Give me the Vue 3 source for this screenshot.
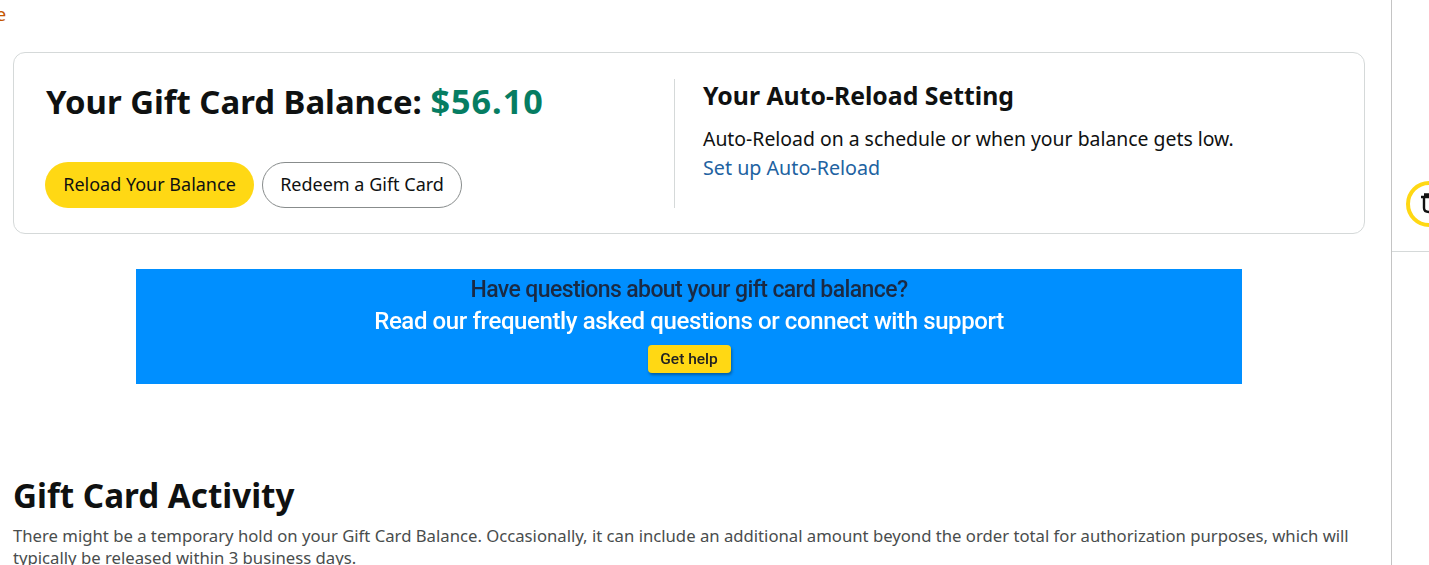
<template>
  <div class="page">
    <main class="main">
      <a class="crumb">e</a>

      <section class="balance-card">
        <div class="balance-card__left">
          <h1 class="balance-card__title">Your Gift Card Balance: <span class="balance-card__amount">$56.10</span></h1>
          <div class="balance-card__actions">
            <button class="btn btn--primary">Reload Your Balance</button>
            <button class="btn btn--outline">Redeem a Gift Card</button>
          </div>
        </div>
        <div class="balance-card__right">
          <h2 class="balance-card__subtitle">Your Auto-Reload Setting</h2>
          <p class="balance-card__text">Auto-Reload on a schedule or when your balance gets low.</p>
          <a class="balance-card__link">Set up Auto-Reload</a>
        </div>
      </section>

      <div class="banner">
        <p class="banner__question">Have questions about your gift card balance?</p>
        <p class="banner__answer">Read our frequently asked questions or connect with support</p>
        <span class="banner__btn">Get help</span>
      </div>

      <section class="activity">
        <h2 class="activity__title">Gift Card Activity</h2>
        <p class="activity__text">There might be a temporary hold on your Gift Card Balance. Occasionally, it can include an additional amount beyond the order total for authorization purposes, which will typically be released within 3 business days.</p>
      </section>
    </main>

    <aside class="side">
      <div class="side__top">
        <span class="side__badge">
          <svg viewBox="0 0 24 24" class="side__icon" aria-hidden="true">
            <path d="M5 5 H24 M8 2.5 H18 M8 5 V16 C8 19 10 20 13 20 H24" />
          </svg>
        </span>
      </div>
    </aside>
  </div>
</template>

<script setup>
</script>

<style>
html,
body {
  margin: 0;
  height: 565px;
  overflow: hidden;
  background: #ffffff;
}
</style>

<style scoped>
.page {
  display: flex;
  width: 1429px;
  height: 565px;
  overflow: hidden;
  font-family: "Noto Sans", "Open Sans", Arial, sans-serif;
  color: #0f1111;
}

.main {
  width: 1392px;
  flex: none;
  box-sizing: border-box;
  padding: 0 26px 0 13px;
  border-right: 1px solid #c4c4c4;
}

.crumb {
  display: block;
  height: 52px;
  margin-left: -13px;
  text-indent: -4px;
  padding-top: 4px;
  box-sizing: border-box;
  font-size: 18px;
  line-height: 20px;
  color: #c45500;
}

.balance-card {
  display: flex;
  height: 182px;
  box-sizing: border-box;
  border: 1px solid #d5d9d9;
  border-radius: 12px;
  padding: 25px 0 25px 31px;
}

.balance-card__left {
  width: 629px;
  flex: none;
}

.balance-card__title {
  margin: 0;
  padding-left: 1px;
  font-size: 32.9px;
  line-height: 46px;
  font-weight: 700;
  white-space: nowrap;
}

.balance-card__amount {
  color: #067d62;
  font-size: 34.2px;
  letter-spacing: 1px;
}

.balance-card__actions {
  display: flex;
  gap: 8px;
  margin-top: 37px;
}

.btn {
  height: 46px;
  box-sizing: border-box;
  border-radius: 23px;
  font: inherit;
  font-size: 18px;
  color: #0f1111;
  padding: 0 0 2px;
}

.btn--primary {
  width: 209px;
  background: #ffd814;
  border: none;
}

.btn--outline {
  width: 200px;
  background: #ffffff;
  border: 1px solid #888c8c;
}

.balance-card__right {
  flex: 1;
  margin-top: 1px;
  border-left: 1px solid #d5d9d9;
  padding-left: 28px;
}

.balance-card__subtitle {
  margin: 0;
  font-size: 24.8px;
  line-height: 33px;
  font-weight: 700;
}

.balance-card__text {
  margin: 12px 0 0;
  font-size: 19.4px;
  line-height: 29px;
}

.balance-card__link {
  font-size: 19.7px;
  line-height: 29px;
  color: #2162a1;
}

.banner {
  display: flex;
  flex-direction: column;
  align-items: center;
  width: 1106px;
  height: 115px;
  margin: 35px 0 0 123px;
  background: #008fff;
  font-family: Roboto, "Noto Sans", sans-serif;
  font-weight: 500;
  filter: blur(0.4px);
}

.banner__question {
  margin: 7px 0 0;
  font-size: 23px;
  line-height: 28px;
  letter-spacing: -0.6px;
  color: #1a2a44;
}

.banner__answer {
  margin: 2px 0 0;
  font-size: 24px;
  line-height: 30px;
  letter-spacing: -0.39px;
  color: #ffffff;
}

.banner__btn {
  width: 83px;
  height: 28px;
  margin-top: 9px;
  border-radius: 4px;
  background: #ffd814;
  box-shadow: 1px 2px 3px rgba(0, 0, 0, 0.35);
  font-size: 15.5px;
  line-height: 28px;
  text-align: center;
  color: #222222;
}

.activity {
  margin-top: 90px;
}

.activity__title {
  margin: 0;
  font-size: 33.2px;
  line-height: 44px;
  font-weight: 700;
}

.activity__text {
  margin: 7px 0 0;
  font-size: 16.7px;
  line-height: 22px;
  color: #494d4d;
}

.side {
  flex: 1;
  min-width: 0;
}

.side__top {
  height: 252px;
  box-sizing: border-box;
  border-bottom: 1px solid #d5d9d9;
  padding: 181px 0 0 14px;
}

.side__badge {
  display: block;
  width: 46px;
  height: 46px;
  box-sizing: border-box;
  border: 4px solid #ffd814;
  border-radius: 50%;
  padding: 7px 0 0 6px;
}

.side__icon {
  display: block;
  width: 24px;
  height: 24px;
  fill: none;
  stroke: #111111;
  stroke-width: 2.4;
}
</style>
